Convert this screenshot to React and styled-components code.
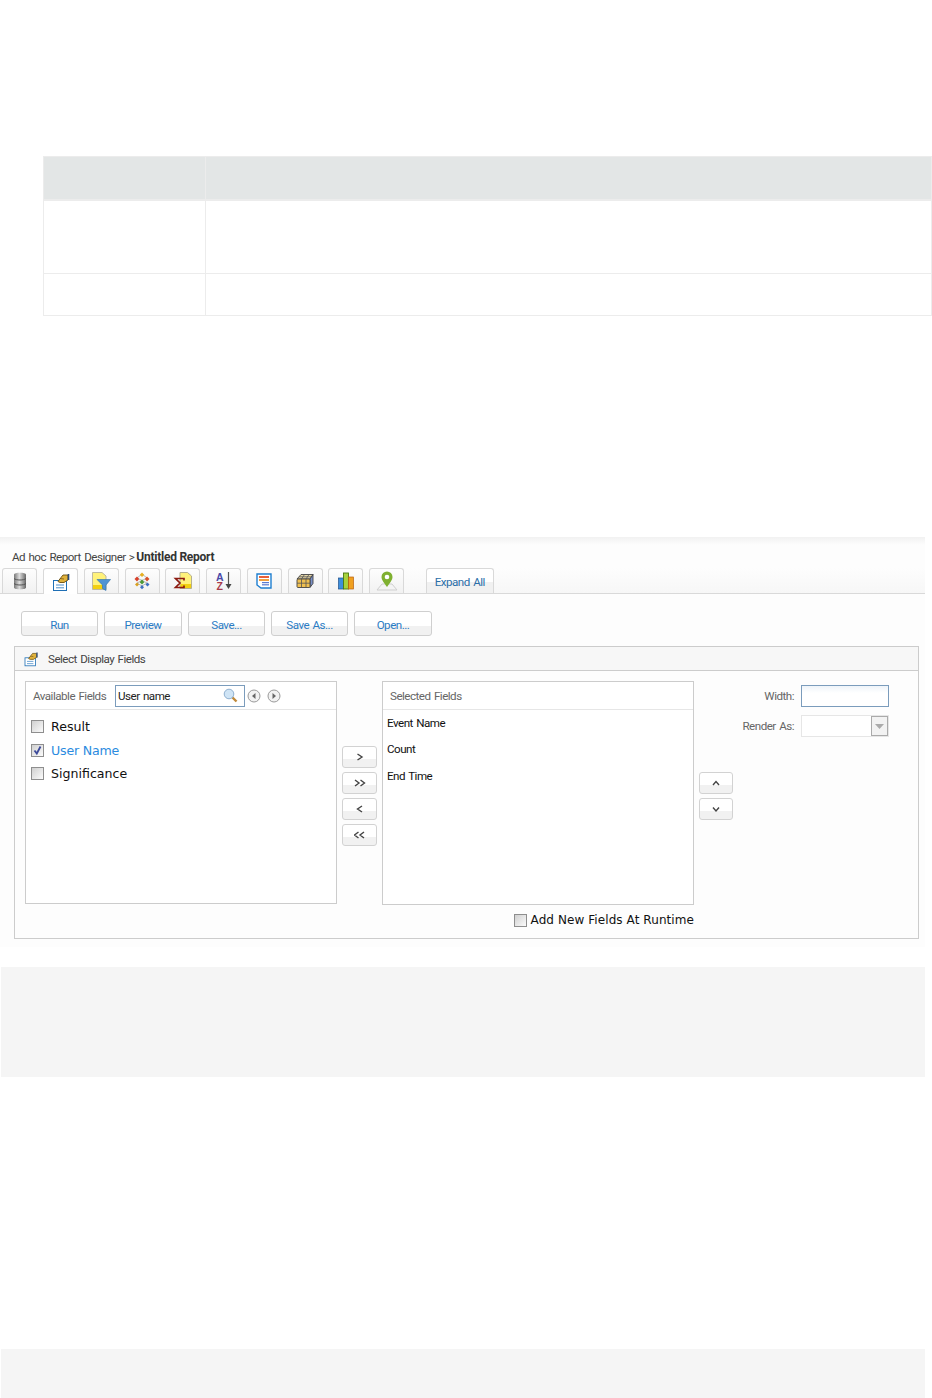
import React from "react";
import styled, { createGlobalStyle } from "styled-components";

const Global = createGlobalStyle`
  html, body { margin: 0; padding: 0; background: #fff; }
  * { box-sizing: border-box; }
`;
const cond = `Roboto, "Liberation Sans", sans-serif`;
const wide = `"DejaVu Sans", Verdana, sans-serif`;
const narrow = `font: 11.6px ${cond}; letter-spacing: -0.5px; word-spacing: 1px;`;

const Page = styled.div`width: 932px; height: 1398px; overflow: hidden; background: #fff; padding-top: 156px;`;

const SpecTable = styled.div`
  margin-left: 43px; width: 889px;
  display: grid; grid-template-columns: 162px 1fr;
  border-left: 1px solid #ececec; border-top: 1px solid #ececec;
`;
const SpecCell = styled.div`
  height: ${p => p.$h}px;
  background: ${p => p.$head ? "#e3e6e6" : "#fff"};
  border-right: 1px solid #ececec;
  border-bottom: ${p => p.$head ? "2px" : "1px"} solid #ececec;
`;

const Shot = styled.div`
  margin-top: 221px; width: 925px; height: 410px;
  background: linear-gradient(#f1f1f1 0, #fdfdfd 8px);
  padding-top: 12px;
`;
const Crumb = styled.div`
  ${narrow} line-height: 16px; color: #444; padding-left: 12px; height: 19px;
  b { font-size: 12px; font-weight: 700; color: #333; letter-spacing: -0.25px; word-spacing: 0; }
  span { margin: 0 2px 0 3px; }
`;
const TabBar = styled.div`
  display: flex; height: 26px; padding-left: 2.3px; align-items: flex-end;
  border-bottom: 1px solid #d9d9d9;
  background: linear-gradient(#fdfdfd, #f7f7f7);
`;
const Tab = styled.div`
  width: 35px; height: 25px; margin-right: 5.75px; flex: none;
  display: flex; align-items: center; justify-content: center;
  border: 1px solid #d9d9d9; border-bottom: 0; border-radius: 3px 3px 0 0;
  background: ${p => p.$active ? "#fff" : "linear-gradient(#fdfdfd, #f1f1f1)"};
  ${p => p.$active && "height: 26px; margin-bottom: -1px;"}
`;
const ExpandTab = styled(Tab)`
  width: 68px; margin-left: 16px; margin-right: 0; padding-top: 1px;
  ${narrow} color: #2b6ea8;
  background: linear-gradient(#fff 55%, #f1f1f1 55%);
`;
const ButtonRow = styled.div`display: flex; gap: 6px; padding: 17px 0 0 21px; height: 52px;`;
const Btn = styled.div`
  width: ${p => p.$w}px; height: 25px; padding-top: 2px;
  display: flex; align-items: center; justify-content: center;
  ${narrow} color: #2b7cc4;
  border: 1px solid #cfcfcf; border-radius: 3px;
  background: linear-gradient(#fff 60%, #f1f1f1 60%);
`;
const Panel = styled.div`
  margin-left: 14px; width: 905px; height: 293px;
  border: 1px solid #ccc; background: #fdfdfd;
`;
const PanelHead = styled.div`
  height: 24px; display: flex; align-items: center; gap: 9px; padding-left: 8px;
  background: #f7f7f7; border-bottom: 1px solid #ccc;
  ${narrow} color: #444;
`;
const PanelBody = styled.div`
  display: flex; padding: 10px 0 0 10px; align-items: flex-start;
`;
const FieldBox = styled.div`
  width: 312px; height: ${p => p.$h}px; border: 1px solid #ccc; background: #fff; flex: none;
`;
const BoxHead = styled.div`
  height: 28px; display: flex; align-items: center; padding-left: ${p => p.$pl}px;
  border-bottom: 1px solid #e6e6e6;
  ${narrow} color: #666;
`;
const BoxTitle = styled.span`width: 74px; white-space: nowrap; flex: none;`;
const SearchInput = styled.div`
  width: 130px; height: 22px; margin-left: 8px;
  border: 1px solid #7b9cbc; padding-left: 2px;
  display: flex; align-items: center; justify-content: space-between; padding-right: 6px;
  ${narrow} color: #222; background: #fff;
`;
const PagerDot = styled.svg`margin-left: ${p => p.$ml}px;`;
const CheckList = styled.div`padding: 5px 0 0 5px; display: flex; flex-direction: column;`;
const CheckRow = styled.div`
  display: flex; align-items: center; height: 23.5px; gap: 7px;
  font: 12.6px ${wide}; color: ${p => p.$on ? "#2b8be0" : "#111"};
  letter-spacing: ${p => p.$on ? "-0.2px" : "0"};
`;
const Box = styled.div`
  width: 13px; height: 13px; border: 1px solid #8e8e8e; flex: none;
  background: linear-gradient(135deg, #d0d0d0, #fbfbfb);
  display: flex; align-items: center; justify-content: center;
`;
const MoveCol = styled.div`
  display: flex; flex-direction: column; gap: 4px; width: ${p => p.$w}px; flex: none;
  margin: ${p => p.$top}px ${p => p.$mr}px 0 ${p => p.$ml}px;
`;
const MoveBtn = styled.div`
  width: 100%; height: 22px; display: flex; align-items: center; justify-content: center;
  border: 1px solid #d2d2d2; border-radius: 3px;
  background: linear-gradient(#fff 62%, #f1f1f1 62%);
`;
const SelectedItems = styled.div`padding: 0 0 0 4px; display: flex; flex-direction: column;`;
const SelectedItem = styled.div`
  height: 26.3px; display: flex; align-items: center;
  ${narrow} color: #111;
`;
const Props = styled.div`
  display: grid; grid-template-columns: 62px 88px; column-gap: 7px; row-gap: 8px;
  margin: 4px 0 0 -6px; align-items: center; width: 157px;
`;
const PropLabel = styled.div`
  text-align: right; white-space: nowrap; ${narrow} color: #666;
`;
const WidthInput = styled.div`
  height: 22px; border: 1px solid #7b9cbc;
  background: linear-gradient(#eef4f9, #fff 7px);
`;
const RenderSelect = styled.div`
  height: 22px; border: 1px solid #e6e6e6; background: #fff; display: flex; justify-content: flex-end;
`;
const Caret = styled.div`
  width: 17px; height: 20px; border: 1px solid #aaa; background: #f2f2f2;
  display: flex; align-items: center; justify-content: center;
`;
const RuntimeRow = styled.div`
  display: flex; align-items: center; justify-content: flex-end; gap: 4px;
  width: 669px; margin: 7px 0 0 10px; height: 17px;
  font: 12px ${wide}; letter-spacing: 0.08px; color: #111;
`;
const RuntimeText = styled.span`position: relative; top: -1px;`;
const Band = styled.div`
  margin: ${p => p.$top}px 0 0 1px; width: 924px; height: ${p => p.$h}px; background: #f5f5f5;
`;

const Chevron = ({ d }) => (
  <svg width="12" height="10" viewBox="0 0 12 10" fill="none" stroke="#444" strokeWidth="1.4"><path d={d} /></svg>
);

const Db = () => (
  <svg width="20" height="20" viewBox="0 0 20 20">
    <defs><linearGradient id="dbg"><stop offset="0" stopColor="#777" /><stop offset=".45" stopColor="#ddd" /><stop offset="1" stopColor="#666" /></linearGradient></defs>
    <path d="M4 3.5C4 1 16 1 16 3.5V16.5C16 19 4 19 4 16.5Z" fill="url(#dbg)" />
    <path d="M4 7.5C6 9.5 14 9.5 16 7.5M4 12.5C6 14.5 14 14.5 16 12.5" stroke="#555" fill="none" />
  </svg>
);
const Fields = ({ s = 20 }) => (
  <svg width={s} height={s} viewBox="0 0 20 20">
    <rect x="2.5" y="8.5" width="13" height="10" fill="#fff" stroke="#1f6fb5" />
    <path d="M5 13H13M5 15.8H13" stroke="#4d8fc9" />
    <path d="M7 9.5L10 5.5L12 3H17V8L13 10.5H9Z" fill="#e0b23c" stroke="#6a4e10" strokeWidth=".9" />
    <path d="M9 6.5L13 7" stroke="#6a4e10" strokeWidth=".7" />
    <path d="M17.5 2V8" stroke="#2b4a77" strokeWidth="1.6" />
  </svg>
);
const Filter = () => (
  <svg width="20" height="20" viewBox="0 0 20 20">
    <path d="M1.5 1.5H11L15 5V18.5H1.5Z" fill="#fff27a" stroke="#bdb9a0" />
    <rect x="2" y="14" width="12.5" height="4" fill="#f2cf10" />
    <path d="M6 8.5H19.5L15 14V19.5L11.5 17.5V14Z" fill="#4f94d4" stroke="#2d6ea8" strokeWidth=".6" />
  </svg>
);
const Diamonds = () => (
  <svg width="20" height="20" viewBox="0 0 20 20">
    <path d="M5 7L10 3L15 7M5 12L10 15M15 12L10 15M5 7L15 12M15 7L5 12" stroke="#999" fill="none" strokeWidth=".7" />
    <path d="M10 1.5L12.2 3.8L10 6L7.8 3.8Z" fill="#e8b020" />
    <path d="M5 5.5L7.2 8L5 10.5L2.5 8Z" fill="#d8402a" />
    <path d="M15 5.5L17.5 8L15 10.5L12.8 8Z" fill="#d8502a" />
    <path d="M10 8.5L12.3 11.2L10 13.5L7.7 11.2Z" fill="#4f9a35" />
    <path d="M5 11.5L7 13.5L5 15.5L3 13.5Z" fill="#d8a020" />
    <path d="M15.5 11.5L17.5 13.5L15.5 15.5L13.5 13.5Z" fill="#3f70c0" />
    <path d="M10 14L12 16.2L10 18.2L8 16.2Z" fill="#3f70c0" />
  </svg>
);
const Sigma = () => (
  <svg width="20" height="20" viewBox="0 0 20 20">
    <path d="M7 1.5H14.5L18.5 5V17.5H7Z" fill="#fff27a" stroke="#b5b090" />
    <rect x="7.5" y="13" width="10.5" height="4" fill="#f2cf10" />
    <path d="M11 9.5V7.5H2.5L7 12L2.5 16.5H11V14.5" fill="none" stroke="#8c1a10" strokeWidth="1.7" />
  </svg>
);
const Sort = () => (
  <svg width="20" height="20" viewBox="0 0 20 20">
    <text x="2" y="9.5" fontFamily="Liberation Sans" fontWeight="700" fontSize="10.5" fill="#4a4aa8">A</text>
    <text x="2.5" y="19" fontFamily="Liberation Sans" fontWeight="700" fontSize="10.5" fill="#a83a4a">Z</text>
    <path d="M14.5 1V15" stroke="#555" strokeWidth="1.2" />
    <path d="M11.5 13H17.5L14.5 18Z" fill="#444" />
  </svg>
);
const Report = () => (
  <svg width="20" height="20" viewBox="0 0 20 20">
    <path d="M3 3H17V17H7L3 14Z" fill="#fff" stroke="#1f7fd0" strokeWidth="1.4" />
    <rect x="5" y="5" width="10" height="2" fill="#e8603a" />
    <rect x="5" y="8" width="10" height="2" fill="#f0a040" />
    <rect x="8" y="11" width="7" height="1.2" fill="#5a7ad0" />
    <rect x="8" y="13.2" width="7" height="1.2" fill="#5a7ad0" />
  </svg>
);
const Cube = () => (
  <svg width="20" height="20" viewBox="0 0 20 20">
    <path d="M2 8L6 3.5H18L15 8Z" fill="#e6d7a8" stroke="#444" strokeWidth=".9" />
    <path d="M15 8L18 3.5V12.5L15 16.5Z" fill="#7a90c8" stroke="#444" strokeWidth=".9" />
    <rect x="2" y="8" width="13" height="8.5" rx="1" fill="#f0c050" stroke="#444" strokeWidth=".9" />
    <path d="M6.5 8V16.5M11 8V16.5M2 12.2H15M9.5 3.5L6.5 8M14 3.5L11 8M4 5.8H16.5" stroke="#555" strokeWidth=".8" fill="none" />
  </svg>
);
const Bars = () => (
  <svg width="20" height="20" viewBox="0 0 20 20">
    <rect x="2.5" y="7" width="5" height="11" fill="#3d8fdc" stroke="#1d4f8c" strokeWidth=".7" />
    <rect x="7.5" y="2" width="5" height="16" fill="#a8d23c" stroke="#4a7a10" strokeWidth=".9" />
    <rect x="12.5" y="6" width="5" height="12" fill="#f0a020" stroke="#b86010" strokeWidth=".7" />
  </svg>
);
const Pin = () => (
  <svg width="22" height="22" viewBox="0 0 22 22">
    <path d="M1 20L6 14H16L21 20Z" fill="#f4f4f4" stroke="#cfcfcf" />
    <path d="M11 17C8 12.5 5.5 10 5.5 7A5.5 5.5 0 0 1 16.5 7C16.5 10 14 12.5 11 17Z" fill="#7fb030" />
    <circle cx="11" cy="7" r="2.3" fill="#fff" />
  </svg>
);
const Lens = () => (
  <svg width="15" height="15" viewBox="0 0 15 15">
    <path d="M9 9L13.5 13.5" stroke="#c08a3a" strokeWidth="2.4" />
    <circle cx="6" cy="6" r="4.8" fill="#cfe4f5" stroke="#8fb0d0" />
  </svg>
);
const Pager = ({ d, ml }) => (
  <PagerDot $ml={ml} width="14" height="14" viewBox="0 0 14 14">
    <circle cx="7" cy="7" r="6" fill="#f2f2f2" stroke="#9a9a9a" />
    <path d={d} fill="#666" />
  </PagerDot>
);
const Tick = () => (
  <svg width="11" height="11" viewBox="0 0 11 11" fill="none" stroke="#3d4a9a" strokeWidth="1.8"><path d="M2.5 5.5L4.8 8.5L8.5 1.5" /></svg>
);

const icons = [Db, Fields, Filter, Diamonds, Sigma, Sort, Report, Cube, Bars, Pin];

export default function App() {
  return (
    <Page>
      <Global />
      <SpecTable>
        <SpecCell $head $h={44} /><SpecCell $head $h={44} />
        <SpecCell $h={73} /><SpecCell $h={73} />
        <SpecCell $h={42} /><SpecCell $h={42} />
      </SpecTable>
      <Shot>
        <Crumb>Ad hoc Report Designer<span>&gt;</span><b>Untitled Report</b></Crumb>
        <TabBar>
          {icons.map((I, i) => <Tab key={i} $active={i === 1}><I /></Tab>)}
          <ExpandTab>Expand All</ExpandTab>
        </TabBar>
        <ButtonRow>
          <Btn $w={77}>Run</Btn>
          <Btn $w={78}>Preview</Btn>
          <Btn $w={77}>Save...</Btn>
          <Btn $w={77}>Save As...</Btn>
          <Btn $w={78}>Open...</Btn>
        </ButtonRow>
        <Panel>
          <PanelHead><Fields s={16} />Select Display Fields</PanelHead>
          <PanelBody>
            <FieldBox $h={223}>
              <BoxHead $pl={7}>
                <BoxTitle>Available Fields</BoxTitle>
                <SearchInput>User name<Lens /></SearchInput>
                <Pager ml={2} d="M8.5 4V10L5 7Z" />
                <Pager ml={6} d="M5.5 4V10L9 7Z" />
              </BoxHead>
              <CheckList>
                <CheckRow><Box />Result</CheckRow>
                <CheckRow $on><Box><Tick /></Box>User Name</CheckRow>
                <CheckRow><Box />Significance</CheckRow>
              </CheckList>
            </FieldBox>
            <MoveCol $w={35} $top={65} $ml={5} $mr={5}>
              <MoveBtn><Chevron d="M3.5 2L8 5L3.5 8" /></MoveBtn>
              <MoveBtn><Chevron d="M1 2L5 5L1 8M6.5 2L10.5 5L6.5 8" /></MoveBtn>
              <MoveBtn><Chevron d="M8 2L3.5 5L8 8" /></MoveBtn>
              <MoveBtn><Chevron d="M4.5 2L0.5 5L4.5 8M10 2L6 5L10 8" /></MoveBtn>
            </MoveCol>
            <FieldBox $h={224}>
              <BoxHead $pl={7}>Selected Fields</BoxHead>
              <SelectedItems>
                <SelectedItem>Event Name</SelectedItem>
                <SelectedItem>Count</SelectedItem>
                <SelectedItem>End Time</SelectedItem>
              </SelectedItems>
            </FieldBox>
            <MoveCol $w={34} $top={91} $ml={5} $mr={5}>
              <MoveBtn><Chevron d="M3 7L6 3.5L9 7" /></MoveBtn>
              <MoveBtn><Chevron d="M3 3.5L6 7L9 3.5" /></MoveBtn>
            </MoveCol>
            <Props>
              <PropLabel>Width:</PropLabel><WidthInput />
              <PropLabel>Render As:</PropLabel>
              <RenderSelect><Caret><svg width="9" height="5" viewBox="0 0 9 5"><path d="M0 0H9L4.5 5Z" fill="#aaa" /></svg></Caret></RenderSelect>
            </Props>
          </PanelBody>
          <RuntimeRow><Box /><RuntimeText>Add New Fields At Runtime</RuntimeText></RuntimeRow>
        </Panel>
      </Shot>
      <Band $top={20} $h={110} />
      <Band $top={272} $h={49} />
    </Page>
  );
}
